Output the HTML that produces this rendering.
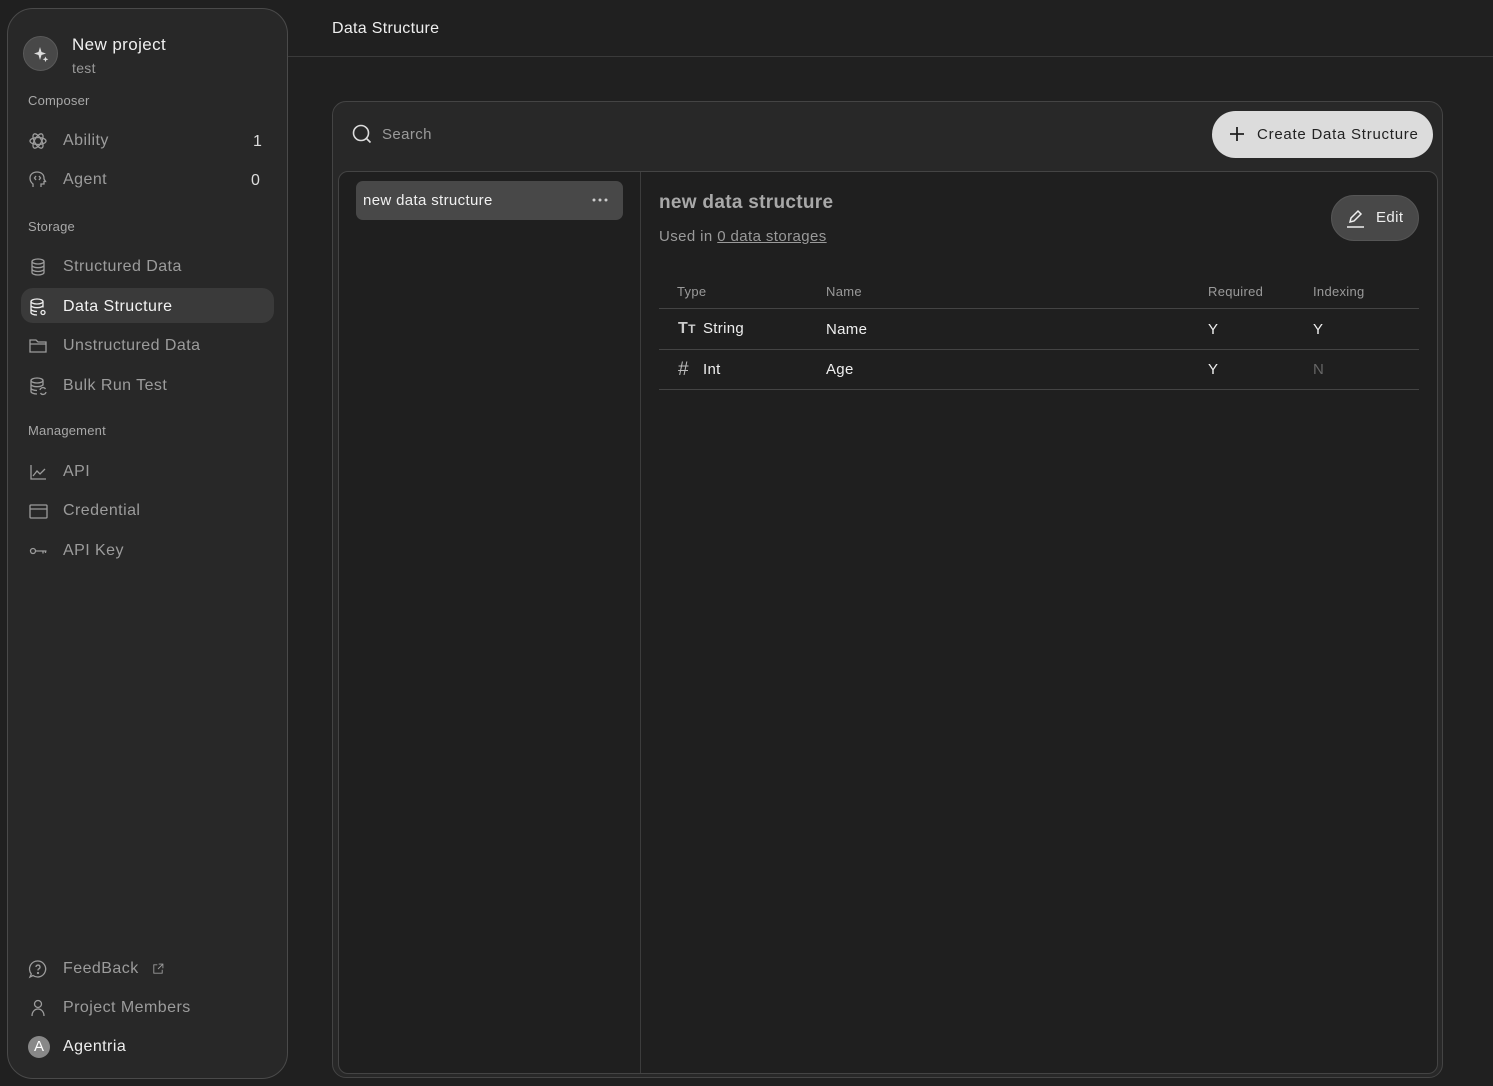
<!DOCTYPE html>
<html><head><meta charset="utf-8"><style>
*{box-sizing:border-box;margin:0;padding:0}
body{width:1493px;height:1086px;background:#202020;font-family:"Liberation Sans",sans-serif;color:#e8e8e8;position:relative;overflow:hidden}
.a{position:absolute}
.side{left:7px;top:8px;width:281px;height:1071px;background:#282828;border:1px solid #4a4a4a;border-radius:26px}
.sec{font-size:13px;color:#a8a8a8;left:28px;letter-spacing:.2px}
.it{left:28px;font-size:16px;color:#9c9c9c;display:flex;align-items:center;height:20px;letter-spacing:.45px}
.it svg{width:20px;height:20px;margin-right:15px;stroke:#9c9c9c;fill:none;stroke-width:1.3}
.th{font-size:13px;color:#9a9a9a;top:284px;letter-spacing:.3px}
.td{font-size:15px;color:#eee;letter-spacing:.3px}
.hl{left:659px;width:760px;height:1px;background:#444}
</style></head><body>
<div class="a side"></div>
<div class="a" style="left:23px;top:36px;width:35px;height:35px;border-radius:50%;background:#484848;border:1px solid #5a5a5a"></div>
<svg class="a" style="left:31px;top:44px" width="20" height="20" viewBox="0 0 20 20"><path d="M9 3 L10.5 8 L15 9.5 L10.5 11 L9 16 L7.5 11 L3 9.5 L7.5 8Z" fill="#ddd"/><path d="M14.5 12.5 l0.8 2 l2 0.8 l-2 0.8 l-0.8 2 l-0.8-2 l-2-0.8 l2-0.8z" fill="#ddd"/></svg>
<div class="a" style="left:72px;top:35px;font-size:17px;color:#f0f0f0;letter-spacing:.4px">New project</div>
<div class="a" style="left:72px;top:60px;font-size:14px;color:#999;letter-spacing:.3px">test</div>
<div class="a sec" style="top:93px">Composer</div>
<div class="a it" style="top:131px"><svg viewBox="0 0 20 20"><ellipse cx="10" cy="10" rx="8" ry="3.5"/><ellipse cx="10" cy="10" rx="8" ry="3.5" transform="rotate(60 10 10)"/><ellipse cx="10" cy="10" rx="8" ry="3.5" transform="rotate(120 10 10)"/></svg>Ability</div>
<div class="a" style="left:253px;top:133px;font-size:16px;color:#ddd">1</div>
<div class="a it" style="top:170px"><svg viewBox="0 0 20 20"><path d="M5 17v-3c-2-1.5-3-3.5-3-6 0-3.5 3-6 7-6s7 2.5 7 6v1l1.5 2.5h-1.5v2.5h-3v3"/><path d="M8 6l-1.5 2 1.5 2M11 6l1.5 2-1.5 2"/></svg>Agent</div>
<div class="a" style="left:251px;top:172px;font-size:16px;color:#ddd">0</div>
<div class="a sec" style="top:219px">Storage</div>
<div class="a it" style="top:257px"><svg viewBox="0 0 20 20"><ellipse cx="10" cy="4.5" rx="6" ry="2.5"/><path d="M4 4.5v11c0 1.4 2.7 2.5 6 2.5s6-1.1 6-2.5v-11M4 8.2c0 1.4 2.7 2.5 6 2.5s6-1.1 6-2.5M4 12c0 1.4 2.7 2.5 6 2.5s6-1.1 6-2.5"/></svg>Structured Data</div>
<div class="a" style="left:21px;top:288px;width:253px;height:35px;border-radius:12px;background:#3a3a3a"></div>
<div class="a it" style="top:297px;color:#f2f2f2"><svg viewBox="0 0 20 20" style="stroke:#eee"><ellipse cx="9" cy="4.5" rx="6" ry="2.5"/><path d="M3 4.5v11c0 1.4 2.7 2.5 6 2.5M15 4.5v6M3 8.2c0 1.4 2.7 2.5 6 2.5s6-1.1 6-2.5M3 12c0 1.4 2.7 2.5 6 2.5"/><circle cx="15" cy="15.5" r="2"/></svg>Data Structure</div>
<div class="a it" style="top:336px"><svg viewBox="0 0 20 20"><path d="M2 4h6l2 2h8v10H2z M2 8h16"/></svg>Unstructured Data</div>
<div class="a it" style="top:376px"><svg viewBox="0 0 20 20"><ellipse cx="9" cy="4.5" rx="6" ry="2.5"/><path d="M3 4.5v11c0 1.4 2.7 2.5 6 2.5M15 4.5v5M3 8.2c0 1.4 2.7 2.5 6 2.5s6-1.1 6-2.5M3 12c0 1.4 2.7 2.5 6 2.5"/><path d="M12 14a3 3 0 0 1 5.5-1M18 16a3 3 0 0 1-5.5 1"/></svg>Bulk Run Test</div>
<div class="a sec" style="top:423px">Management</div>
<div class="a it" style="top:462px"><svg viewBox="0 0 20 20"><path d="M3 3v14h15M5 14l4-5 3 3 5-5"/></svg>API</div>
<div class="a it" style="top:501px"><svg viewBox="0 0 20 20"><rect x="2" y="4" width="17" height="13" rx="1"/><path d="M2 8h17"/></svg>Credential</div>
<div class="a it" style="top:541px"><svg viewBox="0 0 20 20"><circle cx="5" cy="10" r="2.5"/><path d="M7.5 10h11M15 10v2.5M17.5 10v2"/></svg>API Key</div>
<div class="a it" style="top:959px"><svg viewBox="0 0 20 20"><path d="M10 2a8 8 0 1 1-5 14.5L2 18l1.3-3A8 8 0 0 1 10 2z"/><path d="M8 8a2 2 0 1 1 2.5 2c-.5.2-.5.8-.5 1.5"/><circle cx="10" cy="14" r=".5"/></svg>FeedBack<svg viewBox="0 0 20 20" style="width:14px;height:14px;margin-left:12px"><path d="M9 4H4v12h12v-5M11 3h6v6M17 3l-7 7"/></svg></div>
<div class="a it" style="top:998px"><svg viewBox="0 0 20 20"><circle cx="10" cy="6" r="3.5"/><path d="M4 18c0-4 2.5-7 6-7s6 3 6 7"/></svg>Project Members</div>
<div class="a" style="left:28px;top:1036px;width:22px;height:22px;border-radius:50%;background:#888;color:#fff;font-size:15px;text-align:center;line-height:22px">A</div>
<div class="a" style="left:63px;top:1038px;font-size:16px;color:#eee;letter-spacing:.45px">Agentria</div>

<div class="a" style="left:332px;top:20px;font-size:16px;color:#eee;letter-spacing:.3px">Data Structure</div>
<div class="a" style="left:288px;top:56px;width:1205px;height:1px;background:#3a3a3a"></div>

<div class="a" style="left:332px;top:101px;width:1111px;height:977px;background:#282828;border:1px solid #444;border-radius:14px"></div>
<svg class="a" style="left:351px;top:123px" width="22" height="22" viewBox="0 0 22 22" fill="none" stroke="#ddd" stroke-width="1.6"><circle cx="10" cy="10" r="7.5"/><path d="M15.5 15.5l4 4"/></svg>
<div class="a" style="left:382px;top:126px;font-size:15px;color:#9a9a9a;letter-spacing:.4px">Search</div>
<div class="a" style="left:1212px;top:111px;width:221px;height:47px;border-radius:24px;background:#dcdcdc"></div>
<svg class="a" style="left:1229px;top:126px" width="16" height="16" viewBox="0 0 16 16" stroke="#222" stroke-width="1.8"><path d="M8 1v14M1 8h14"/></svg>
<div class="a" style="left:1257px;top:126px;font-size:15px;color:#222;letter-spacing:.75px">Create Data Structure</div>

<div class="a" style="left:338px;top:171px;width:1100px;height:903px;background:#1f1f1f;border:1px solid #444;border-radius:10px"></div>
<div class="a" style="left:640px;top:172px;width:1px;height:901px;background:#3c3c3c"></div>
<div class="a" style="left:356px;top:181px;width:267px;height:39px;border-radius:7px;background:#484848"></div>
<div class="a" style="left:363px;top:192px;font-size:15px;color:#f0f0f0;letter-spacing:.35px">new data structure</div>
<svg class="a" style="left:592px;top:198px" width="16" height="4"><circle cx="2" cy="2" r="1.5" fill="#ccc"/><circle cx="8" cy="2" r="1.5" fill="#ccc"/><circle cx="14" cy="2" r="1.5" fill="#ccc"/></svg>

<div class="a" style="left:659px;top:192px;font-size:19px;font-weight:bold;color:#a8a8a8;letter-spacing:.3px">new data structure</div>
<div class="a" style="left:659px;top:228px;font-size:15px;color:#9a9a9a;letter-spacing:.4px">Used in <span style="text-decoration:underline">0 data storages</span></div>
<div class="a" style="left:1331px;top:195px;width:88px;height:46px;border-radius:23px;background:#484848;border:1px solid #555"></div>
<svg class="a" style="left:1346px;top:207px" width="20" height="22" viewBox="0 0 20 22" fill="none" stroke="#eee" stroke-width="1.5"><path d="M4 15l1-4 7-7 3 3-7 7z"/><path d="M1 20h17"/></svg>
<div class="a" style="left:1376px;top:209px;font-size:15px;color:#eee;letter-spacing:.4px">Edit</div>

<div class="a th" style="left:677px">Type</div>
<div class="a th" style="left:826px">Name</div>
<div class="a th" style="left:1208px">Required</div>
<div class="a th" style="left:1313px">Indexing</div>
<div class="a hl" style="top:308px"></div>
<div class="a td" style="left:678px;top:320px;font-weight:bold;color:#ccc;font-size:16px">T<span style="font-size:12px">T</span></div>
<div class="a td" style="left:703px;top:320px">String</div>
<div class="a td" style="left:826px;top:321px">Name</div>
<div class="a td" style="left:1208px;top:321px">Y</div>
<div class="a td" style="left:1313px;top:321px">Y</div>
<div class="a hl" style="top:349px"></div>
<div class="a td" style="left:678px;top:359px;font-size:19px;color:#bbb">#</div>
<div class="a td" style="left:703px;top:361px">Int</div>
<div class="a td" style="left:826px;top:361px">Age</div>
<div class="a td" style="left:1208px;top:361px">Y</div>
<div class="a td" style="left:1313px;top:361px;color:#666">N</div>
<div class="a hl" style="top:389px"></div>
</body></html>
